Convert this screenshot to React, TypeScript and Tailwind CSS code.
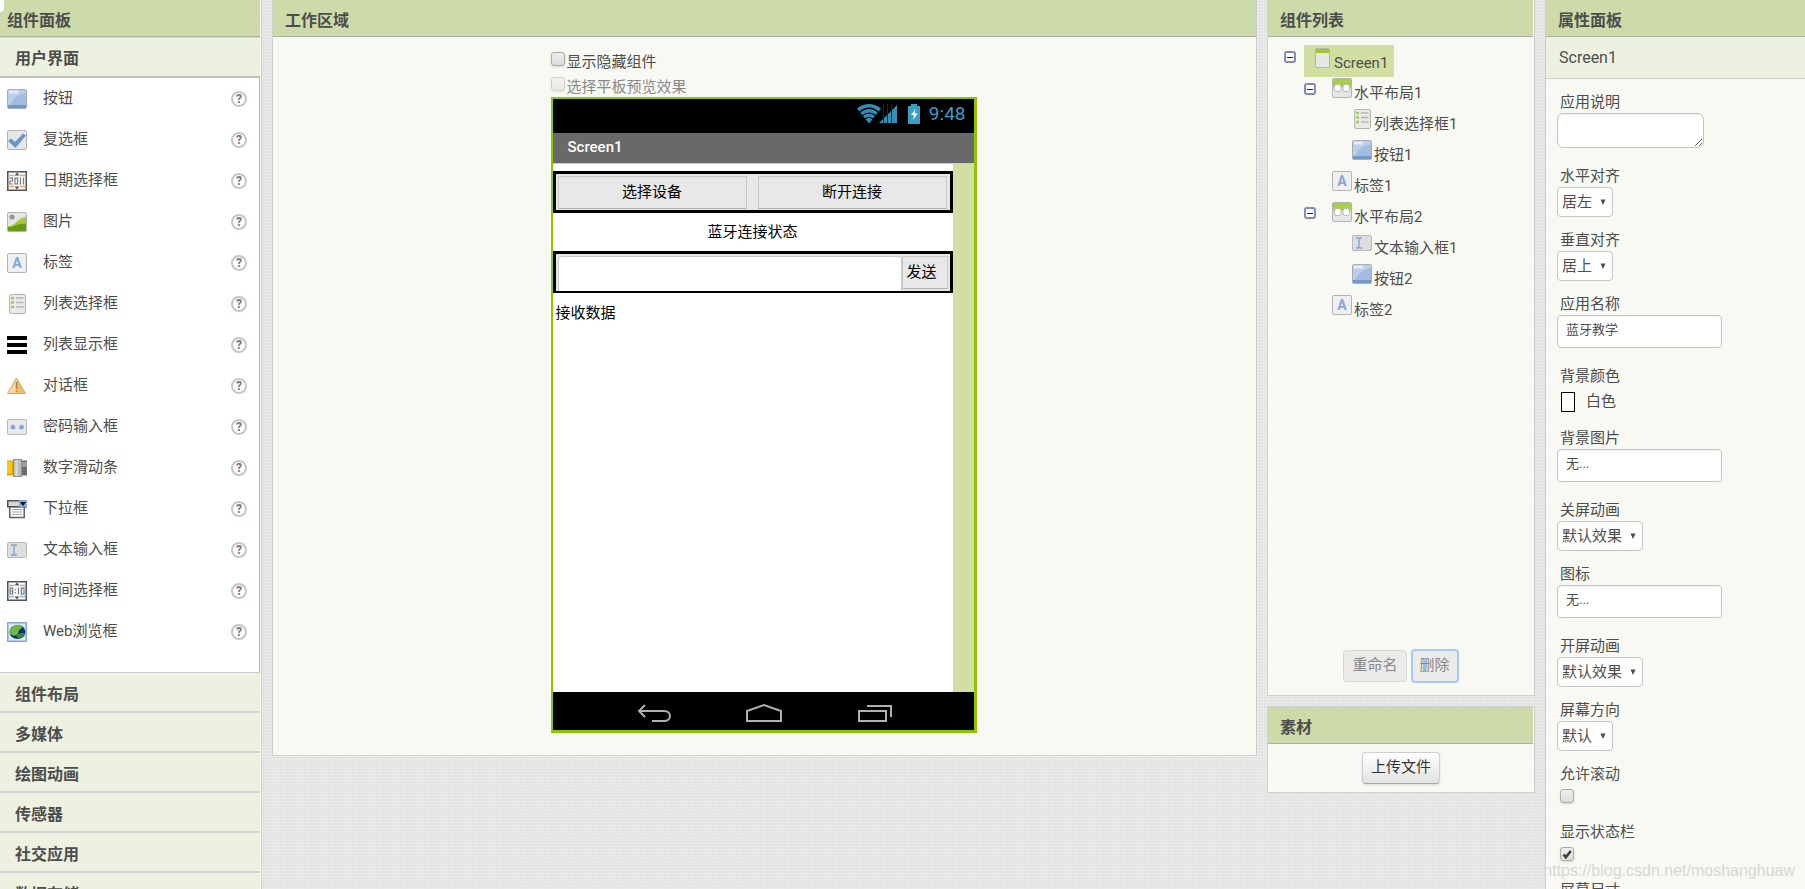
import { useState } from "react";
import type { ReactNode } from "react";
import clsx from "clsx";

type IconName =
  | "button"
  | "checkbox"
  | "date"
  | "image"
  | "label"
  | "listPicker"
  | "listView"
  | "notifier"
  | "password"
  | "slider"
  | "spinner"
  | "textBox"
  | "time"
  | "web"
  | "screen"
  | "horizontal";

const palette: [IconName, string][] = [
  ["button", "按钮"],
  ["checkbox", "复选框"],
  ["date", "日期选择框"],
  ["image", "图片"],
  ["label", "标签"],
  ["listPicker", "列表选择框"],
  ["listView", "列表显示框"],
  ["notifier", "对话框"],
  ["password", "密码输入框"],
  ["slider", "数字滑动条"],
  ["spinner", "下拉框"],
  ["textBox", "文本输入框"],
  ["time", "时间选择框"],
  ["web", "Web浏览框"],
];

const categories = [
  "组件布局",
  "多媒体",
  "绘图动画",
  "传感器",
  "社交应用",
  "数据存储",
];

type TreeNode = { name: string; icon: IconName; children?: TreeNode[] };

const tree: TreeNode = {
  name: "Screen1",
  icon: "screen",
  children: [
    {
      name: "水平布局1",
      icon: "horizontal",
      children: [
        { name: "列表选择框1", icon: "listPicker" },
        { name: "按钮1", icon: "button" },
      ],
    },
    { name: "标签1", icon: "label" },
    {
      name: "水平布局2",
      icon: "horizontal",
      children: [
        { name: "文本输入框1", icon: "textBox" },
        { name: "按钮2", icon: "button" },
      ],
    },
    { name: "标签2", icon: "label" },
  ],
};

const tile = (
  <rect x="0.5" y="0.5" width="19" height="19" rx="1.5" fill="#e6e6e6" stroke="#b3b3b3" />
);

const glyphs: Record<IconName, ReactNode> = {
  button: (
    <>
      <rect x="0.5" y="0.5" width="19" height="19" rx="1.5" fill="#a3bde0" stroke="#a9adb5" />
      <path d="M1 1h18v3C12 5 5 9 3 17H1z" fill="#bccfea" />
      <rect x="2" y="1.5" width="9" height="3" fill="#e3ecf8" />
      <rect x="1" y="16" width="18" height="3" fill="#7496c8" />
    </>
  ),
  checkbox: (
    <>
      {tile}
      <path d="M1 11l3-2.5 4 3.500L16 3.500l3 2L8.500 18z" fill="#6d93cd" />
    </>
  ),
  date: (
    <>
      <rect x="0.75" y="0.75" width="18.5" height="18.5" fill="#fafafa" stroke="#555" strokeWidth="1.5" />
      <path d="M2 4.500h5M13 4.500h5M2 15.500h5M13 15.500h5" stroke="#f0a860" strokeWidth="1.500" />
      <path d="M7.500 4.500L10 1.500l2.500 3zM7.500 15.500l2.500 3 2.500-3z" fill="#555" />
      <path
        d="M2.500 7.200h3v2.800h-2.600v3h3M8 7.200h2.600v5.600H8zM13.500 6.500v7M16.500 6.500v7"
        fill="none"
        stroke="#7d7d7d"
        strokeWidth="1.200"
      />
    </>
  ),
  image: (
    <>
      {tile}
      <circle cx="5" cy="5" r="2.600" fill="#999" />
      <path d="M1 14c8 0 9-8 18-9v14H1z" fill="#a5c83c" />
      <path d="M1 15c5 1 9-4 18-3v7H1z" fill="#689a13" />
    </>
  ),
  label: (
    <>
      <rect x="0.5" y="0.5" width="19" height="19" rx="1.5" fill="#efefef" stroke="#b3b3b3" />
      <text x="10" y="15" textAnchor="middle" fontSize="14" fontWeight="700" fill="#84a5d8">
        A
      </text>
    </>
  ),
  listPicker: (
    <>
      <rect x="2.500" y="0.5" width="16" height="19" rx="1.5" fill="#e9e9e9" stroke="#b3b3b3" />
      <path d="M4 4h3M4 8.500h3M4 13h3" stroke="#a3c957" strokeWidth="2.500" />
      <path d="M9 4h7.500M9 8.500h7.500M9 13h7.500" stroke="#b5b5b5" strokeWidth="1.5" />
    </>
  ),
  listView: <path d="M0 3h20M0 10h20M0 17h20" stroke="#000" strokeWidth="4" />,
  notifier: (
    <>
      <path d="M9.500 2L18.500 17.500H0.500z" fill="#f3bd68" stroke="#b9a88d" />
      <path d="M9.500 3v14H1.500z" fill="#f9d79b" />
      <path d="M9.500 6v7M9.500 14.500v1.500" stroke="#b38335" strokeWidth="1.500" />
    </>
  ),
  password: (
    <>
      <rect x="0.5" y="2.500" width="19" height="15" rx="1.5" fill="#e9e9e9" stroke="#b8b8b8" />
      <path
        d="M6 7.500v5M3.800 8.800l4.400 2.500M8.200 8.800l-4.400 2.500M14.500 7.500v5M12.300 8.800l4.400 2.500M16.700 8.800l-4.400 2.500"
        stroke="#7f9fd2"
        strokeWidth="1.4"
      />
    </>
  ),
  slider: (
    <>
      <rect y="2.500" width="7" height="15" fill="#e3a600" />
      <rect y="3.500" width="5" height="12" fill="#ffc61a" />
      <rect x="14.500" y="2.500" width="5.500" height="15" fill="#6d6d6d" />
      <rect x="14.500" y="4" width="5.500" height="5" fill="#9b9b9b" />
      <rect x="6.500" y="1.500" width="8" height="17" fill="#bdbdbd" stroke="#8d8d8d" />
      <path d="M9.500 2v16" stroke="#dddddd" strokeWidth="2" />
    </>
  ),
  spinner: (
    <>
      <path d="M2.750 7.500h14.500v11H2.750z" fill="#fff" stroke="#59616b" strokeWidth="1.500" />
      <path d="M5 10.500h10M5 13h10M5 15.500h10" stroke="#a5a5a5" />
      <rect x="0.750" y="1.750" width="18.500" height="6" fill="#d5d8dd" stroke="#4c525a" strokeWidth="1.500" />
      <rect x="12" y="1" width="8" height="7" fill="#84a5dd" />
      <path d="M13 3h6L16 7z" fill="#111" />
    </>
  ),
  textBox: (
    <>
      <rect x="0.5" y="2.500" width="19" height="15" rx="1.5" fill="#dedede" stroke="#b8b8b8" />
      <path d="M4 5h2l1 .7L8 5h2M4 15h2l1-.7 1 .7h2M7 5.500v9" fill="none" stroke="#7f9fd2" strokeWidth="1.300" />
    </>
  ),
  time: (
    <>
      <rect x="0.750" y="0.750" width="18.500" height="18.500" fill="#fafafa" stroke="#555" strokeWidth="1.500" />
      <path d="M2 4.500h5M13 4.500h5M2 15.500h5M13 15.500h5" stroke="#8fb4dc" strokeWidth="1.500" />
      <path d="M7.500 4.500L10 1.500l2.500 3zM7.500 15.500l2.500 3 2.500-3z" fill="#555" />
      <path
        d="M3 7.200h2.600v5.600H3zM3 10h2.600M8.300 8v1.200M8.300 11v1.200M11.500 6.500v7M14.300 7.200H17v5.600h-2.700z"
        fill="none"
        stroke="#7d7d7d"
        strokeWidth="1.200"
      />
    </>
  ),
  web: (
    <>
      <rect x="0.750" y="0.750" width="18.500" height="18.500" fill="#dbe9f8" stroke="#85a8d6" strokeWidth="1.500" />
      <ellipse cx="10.500" cy="10" rx="8" ry="7" fill="#12356d" />
      <path d="M3 8c2-5 8-6 11-5l1 3-3 2-1 4-4 2-4-2z" fill="#6dba45" />
      <path d="M9 13l6-2 3 0c-1 3-3 5-7 5.500z" fill="#3c8a35" />
    </>
  ),
  screen: (
    <>
      <rect x="3.500" y="0.500" width="14" height="19" rx="1.500" fill="#e6e6e6" stroke="#b3b3b3" />
      <path d="M4 1h13v4H4z" fill="#a6c52c" />
    </>
  ),
  horizontal: (
    <>
      {tile}
      <path d="M1 1h18v8H1z" fill="#a9cf45" />
      <rect x="2.500" y="6.500" width="6.500" height="7" rx="2" fill="#fff" stroke="#b7b7b7" />
      <rect x="11" y="6.500" width="6.500" height="7" rx="2" fill="#fff" stroke="#b7b7b7" />
    </>
  ),
};

function Icon({ name }: { name: IconName }) {
  return (
    <svg className="h-5 w-5 shrink-0" viewBox="0 0 20 20" aria-hidden="true">
      {glyphs[name]}
    </svg>
  );
}

function PanelHeader({ children, className }: { children: ReactNode; className?: string }) {
  return (
    <h2
      className={clsx(
        "h-[37px] border-b border-[#adb0a3] bg-[#ccdba9] pt-[5px] text-base leading-8 font-bold",
        className ?? "px-3",
      )}
    >
      {children}
    </h2>
  );
}

function Tick({
  id,
  defaultChecked,
  disabled,
}: {
  id: string;
  defaultChecked?: boolean;
  disabled?: boolean;
}) {
  return (
    <span className="relative block h-3.5 w-3.5 shrink-0">
      <input
        id={id}
        type="checkbox"
        defaultChecked={defaultChecked}
        disabled={disabled}
        className="peer block h-3.5 w-3.5 appearance-none rounded-[3px] border border-[#a9a9a9] bg-linear-to-b from-[#eeeeee] to-[#dcdcdc] shadow-sm disabled:opacity-50"
      />
      <svg
        className="pointer-events-none absolute inset-0 hidden h-3.5 w-3.5 peer-checked:block"
        viewBox="0 0 14 14"
      >
        <path d="M3.500 7.500l2.300 2.700L10.800 4" fill="none" stroke="#3b3b3b" strokeWidth="2.600" />
      </svg>
    </span>
  );
}

function PalettePanel() {
  return (
    <aside className="w-[262px] shrink-0 border-r border-[#cfcfcf] bg-[#f8f9f3] pr-px">
      <PanelHeader className="px-[7px]">组件面板</PanelHeader>
      <h3 className="border-t border-b-2 border-t-[#d5d6d0] border-b-[#bfc1ba] bg-[#edf1e0] px-[15px] pt-1 text-base leading-[34px] font-bold">
        用户界面
      </h3>
      <ul className="border-r border-b border-r-[#b4b4a9] border-b-[#cccccc] bg-white pb-5">
        {palette.map(([icon, name]) => (
          <li key={name} className="flex h-[41px] items-center pr-3 pl-[7px]">
            <Icon name={icon} />
            <span className="ml-4 flex-1">{name}</span>
            <button
              className="flex h-4 w-4 items-center justify-center rounded-full border-2 border-[#c6c6c6] text-xs leading-3 font-black text-[#808080]"
              aria-label={`${name}帮助`}
            >
              ?
            </button>
          </li>
        ))}
      </ul>
      {categories.map((name) => (
        <h3
          key={name}
          className="border-b-2 border-[#d0d2cf] bg-[#edf1e0] px-[15px] pt-[5px] text-base leading-[33px] font-bold"
        >
          {name}
        </h3>
      ))}
    </aside>
  );
}

function StatusBar() {
  return (
    <div className="flex h-[34px] items-center justify-end bg-black pr-2 pb-1 text-[#3b9dc4]">
      <svg className="h-5 w-[42px]" viewBox="0 0 42 20" aria-hidden="true">
        <path d="M0 4.500C7-1.500 17-1.500 24 4.500L12 19.500z" fill="#2f8fb6" />
        <path
          d="M2.500 8.200c6-5 13-5 19 0M5.300 11.700c4-3.500 9.400-3.500 13.400 0M8 15c2.500-2 5.500-2 8 0"
          fill="none"
          stroke="#000"
          strokeWidth="1.300"
        />
        <path d="M22 19L40 1v18z" fill="#2f8fb6" />
        <path d="M26.500 0v20M30.500 0v20M34.500 0v20" stroke="#0b2a38" />
      </svg>
      <svg className="mx-2 h-5 w-3.5" viewBox="0 0 14 20" aria-hidden="true">
        <path d="M4 0h6v2h3v18H1V2h3z" fill="#3b9dc4" />
        <path d="M8.500 5L4 11h3l-1 5 4.500-6.500H7.500z" fill="#fff" />
      </svg>
      <span className="text-[19px] leading-6">9:48</span>
    </div>
  );
}

function Phone() {
  const buttonClass =
    "h-[33px] border border-[#c9c9c9] border-b-[#b2b2b2] bg-[#e8e8e8] text-black";
  return (
    <div className="w-[426px] border-t-2 border-r-3 border-b-3 border-l-2 border-[#8fc400] text-black">
      <StatusBar />
      <div className="h-[31px] border-b border-[#c9c9c9] bg-[#696969] px-[15px] text-[15px] leading-7 font-medium text-white">
        Screen1
      </div>
      <div className="flex min-h-[528px] bg-[#d2dfa3]">
        <div className="mr-[21px] flex-1 bg-white pt-[7px]">
          <div className="flex h-[42px] gap-[11px] border-3 border-black bg-[#e8e8e8] pt-0.5 pr-[3px] pl-0.5">
            <button className={clsx(buttonClass, "flex-1")}>选择设备</button>
            <button className={clsx(buttonClass, "flex-1")}>断开连接</button>
          </div>
          <p className="text-center leading-[38px]">蓝牙连接状态</p>
          <div className="flex h-[42px] border-3 border-b-2 border-black bg-[#e8e8e8] px-0.5 pt-0.5">
            <input
              aria-label="文本输入框1"
              className="min-w-0 flex-1 rounded-t border border-b-0 border-[#c9c9c9] bg-white px-2"
            />
            <button className={clsx(buttonClass, "w-[46px] pr-1.5")}>发送</button>
          </div>
          <p className="px-[3px] leading-10">接收数据</p>
        </div>
      </div>
      <div className="flex h-[38px] items-center bg-black pt-1 pl-[84px]">
        <svg
          className="h-5 w-[260px]"
          viewBox="0 0 260 20"
          fill="none"
          stroke="#b0b0b0"
          strokeWidth="2"
          aria-hidden="true"
        >
          <path d="M8 2L2 8l6 6M2 8h25c8 0 8 10 0 10H15" />
          <path d="M110 8l17-6 17 6v10h-34z" />
          <path d="M222 8h27v10h-27zM230 3h24v11" />
        </svg>
      </div>
    </div>
  );
}

function WorkArea() {
  return (
    <main className="min-w-0 flex-1 self-start border-x border-b border-[#cfcfcf] bg-[#f8f9f3] pb-[22px]">
      <PanelHeader>工作区域</PanelHeader>
      <div className="flex justify-center pt-3 pr-0.5">
        <div>
          <div className="flex h-6 gap-0.5 pt-[3px]">
            <Tick id="show-hidden" />
            <label htmlFor="show-hidden" className="leading-[21px]">
              显示隐藏组件
            </label>
          </div>
          <div className="flex h-6 gap-0.5 pt-1 text-[#888]">
            <Tick id="tablet-preview" disabled />
            <label htmlFor="tablet-preview" className="leading-[21px]">
              选择平板预览效果
            </label>
          </div>
          <Phone />
        </div>
      </div>
    </main>
  );
}

function TreeItem({
  node,
  selected,
  onSelect,
}: {
  node: TreeNode;
  selected: string;
  onSelect: (name: string) => void;
}) {
  const [open, setOpen] = useState(true);
  return (
    <li>
      <div className="flex items-start gap-2">
        {node.children ? (
          <button
            className="mt-1.5 flex h-3 w-3 items-center justify-center rounded-[3px] border-2 border-[#7e8cc0] bg-white"
            aria-label={open ? "收起" : "展开"}
            onClick={() => setOpen(!open)}
          >
            <span className="h-px w-1.5 bg-[#1414cc]" />
          </button>
        ) : (
          <span className="w-3" />
        )}
        <button
          className={clsx(
            "flex items-start gap-0.5 pl-2",
            node.name === selected ? "h-8 bg-[#d2dfa3] pt-[3px] pr-1.5" : "h-[31px] pt-px pr-2",
          )}
          onClick={() => onSelect(node.name)}
        >
          <Icon name={node.icon} />
          <span className="leading-[30px]">{node.name}</span>
        </button>
      </div>
      {node.children && open && (
        <ul className="pl-5">
          {node.children.map((child) => (
            <TreeItem key={child.name} node={child} selected={selected} onSelect={onSelect} />
          ))}
        </ul>
      )}
    </li>
  );
}

function ComponentColumn() {
  const [selected, setSelected] = useState("Screen1");
  return (
    <div className="flex w-[268px] shrink-0 flex-col gap-2.5">
      <section className="border-x border-b border-[#cfcfcf] bg-[#f8f9f3] pb-3">
        <PanelHeader className="mr-px px-3">组件列表</PanelHeader>
        <ul className="min-h-[612px] pt-2 pl-4">
          <TreeItem node={tree} selected={selected} onSelect={setSelected} />
        </ul>
        <div className="flex items-center justify-center gap-1">
          <button
            className="h-8 rounded border border-[#d6d6d3] bg-[#ebebe9] px-2 pb-0.5 text-[#888]"
            disabled
          >
            重命名
          </button>
          <button
            className="h-[34px] rounded-sm border-2 border-[#a9c8f8] bg-[#ebebe9] px-[7px] pb-0.5 text-[#888]"
            disabled
          >
            删除
          </button>
        </div>
      </section>
      <section className="border border-[#cfcfcf] bg-[#f8f9f3] pb-2 text-center">
        <PanelHeader className="mr-px px-3 text-left">素材</PanelHeader>
        <button className="mt-2 h-8 rounded border border-[#cfcfcf] border-b-[#aaaaaa] bg-linear-to-b from-white to-[#e2e2e2] px-2 pb-0.5 text-[#333] shadow-sm">
          上传文件
        </button>
      </section>
    </div>
  );
}

function Field({ id, label, children }: { id: string; label: string; children: ReactNode }) {
  return (
    <div>
      <label htmlFor={id} className="block px-[3px] leading-[21px]">
        {label}
      </label>
      {children}
    </div>
  );
}

function SelectField({ id, label, value }: { id: string; label: string; value: string }) {
  return (
    <Field id={id} label={label}>
      <div className="relative mb-[13px] w-fit">
        <select
          id={id}
          className="block h-[30px] appearance-none rounded border border-[#c5c5c5] bg-white pr-[19px] pl-1"
        >
          <option>{value}</option>
        </select>
        <svg
          className="pointer-events-none absolute top-3 right-[7px] h-1.5 w-1.5"
          viewBox="0 0 6 6"
          aria-hidden="true"
        >
          <path d="M0.500 0.500h5L3 6z" fill="#4a4a4a" />
        </svg>
      </div>
    </Field>
  );
}

function InputField({ id, label, value }: { id: string; label: string; value: string }) {
  return (
    <Field id={id} label={label}>
      <input
        id={id}
        defaultValue={value}
        className="mb-[18px] block h-[33px] w-[165px] rounded border border-[#c5c5c5] bg-white px-2 pb-1.5 text-[13px] inset-shadow-xs"
      />
    </Field>
  );
}

function CheckField({ id, label, checked }: { id: string; label: string; checked?: boolean }) {
  return (
    <Field id={id} label={label}>
      <div className="px-[3px] pt-1 pb-[19px]">
        <Tick id={id} defaultChecked={checked} />
      </div>
    </Field>
  );
}

function PropertiesPanel() {
  return (
    <aside className="w-[260px] shrink-0 border-l border-[#cfcfcf] bg-[#f8f9f3]">
      <PanelHeader>属性面板</PanelHeader>
      <p className="border-b border-[#cfd1cc] bg-[#edf1e0] px-[13px] text-base leading-[41px]">
        Screen1
      </p>
      <form className="px-[11px] pt-[13px]">
        <Field id="about" label="应用说明">
          <textarea
            id="about"
            className="mb-[18px] block h-[35px] w-[147px] rounded-md border border-[#c5c5c5] bg-white px-2 inset-shadow-xs"
          />
        </Field>
        <SelectField id="align-h" label="水平对齐" value="居左" />
        <SelectField id="align-v" label="垂直对齐" value="居上" />
        <InputField id="app-name" label="应用名称" value="蓝牙教学" />
        <Field id="bg-color" label="背景颜色">
          <button
            id="bg-color"
            type="button"
            className="mb-4 flex h-[25px] items-center gap-[11px] px-1 pt-1"
          >
            <span className="h-5 w-3.5 border border-black bg-white" />
            白色
          </button>
        </Field>
        <InputField id="bg-image" label="背景图片" value="无..." />
        <SelectField id="close-anim" label="关屏动画" value="默认效果" />
        <InputField id="icon" label="图标" value="无..." />
        <SelectField id="open-anim" label="开屏动画" value="默认效果" />
        <SelectField id="orientation" label="屏幕方向" value="默认" />
        <CheckField id="scrollable" label="允许滚动" />
        <CheckField id="status-bar" label="显示状态栏" checked />
        <SelectField id="sizing" label="屏幕尺寸" value="固定大小" />
      </form>
    </aside>
  );
}

export default function App() {
  return (
    <div className="relative h-screen overflow-hidden bg-[#e3e3e3] bg-[repeating-linear-gradient(0deg,rgba(255,255,255,0.2)_0_1px,transparent_1px_3px),repeating-linear-gradient(90deg,rgba(255,255,255,0.2)_0_1px,transparent_1px_3px)] font-['Roboto','Noto_Sans_CJK_SC',sans-serif] text-[15px] text-[#4d4d4d]">
      <div className="flex items-start gap-2.5">
        <PalettePanel />
        <WorkArea />
        <ComponentColumn />
        <PropertiesPanel />
      </div>
      <span className="absolute top-0 left-0 h-3 w-1 rounded-br bg-white" />
      <span className="pointer-events-none absolute right-2.5 bottom-2 font-['Liberation_Sans',sans-serif] text-base leading-5 text-[#d6d7d3]">
        https://blog.csdn.net/moshanghuaw
      </span>
    </div>
  );
}
